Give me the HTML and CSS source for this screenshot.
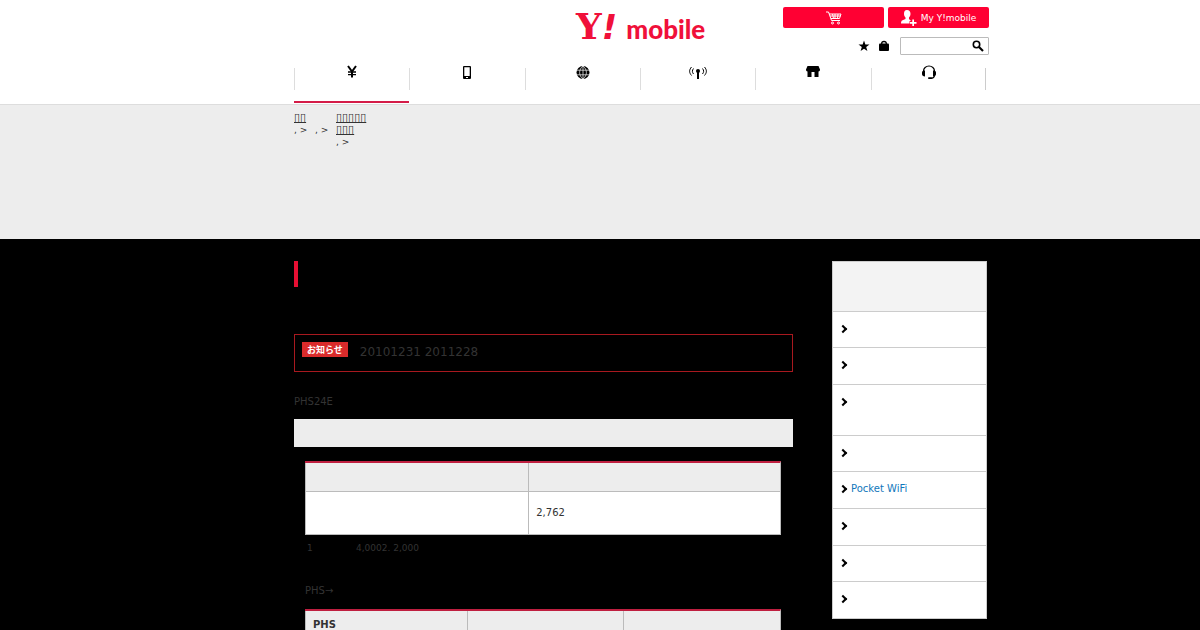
FILE: index.html
```html
<!DOCTYPE html>
<html lang="ja">
<head>
    <meta charset="utf-8">
    <meta name="viewport" content="width=device-width, initial-scale=1">
    <title>Y!mobile</title>
    <link rel="stylesheet" href="styles.css">
</head>
<body>
    <header class="header">
        <div class="wrap">
            <div class="header-top">
                <a class="logo" href="#"><span class="logo-y">Y</span><span class="logo-mark">!</span><span class="logo-name">mobile</span></a>
                <div class="tools">
                    <div class="buttons">
                        <a class="btn" href="#" aria-label="Cart">
                            <svg width="16" height="14" viewBox="0 0 16 14" fill="none" stroke="#fff">
                                <path d="M0 1h2.500l3 8.500H14M3 3h12l-1.500 4.500H5M4 5h10.500M6.500 3l1 4.500M9 3v4.500M12 3l-.5 4.500"/>
                                <circle cx="6.500" cy="12" r="1"/><circle cx="12.500" cy="12" r="1"/>
                            </svg>
                        </a>
                        <a class="btn" href="#">
                            <svg width="16" height="16" viewBox="0 0 16 16" fill="#fff">
                                <path d="M6 0C3.800 0 3 1.600 3 3.800c0 1.600.7 2.900 1.500 3.600v1.600L1 10.500C.3 11 0 12 0 13.500h8.500V11H10L8 9V7.400c.8-.7 1.500-2 1.500-3.600C9.500 1.600 8.200 0 6 0z"/>
                                <path d="M11.300 9.500h1.700V12h2.500v1.700H13V16h-1.700v-2.300H9V12h2.300z"/>
                            </svg>
                            <span>My Y!mobile</span>
                        </a>
                    </div>
                    <form class="search-row">
                        <a href="#" aria-label="Favorites"><svg width="12" height="12" viewBox="0 0 12 12"><path d="M6 .5l1.400 3.900 4.100.1-3.300 2.500 1.200 4L6 8.700 2.600 11l1.200-4L.5 4.500l4.100-.1z"/></svg></a>
                        <a href="#" aria-label="Shopping bag"><svg width="12" height="12" viewBox="0 0 12 12"><rect x="1" y="3.500" width="10" height="7.500" rx="1"/><path d="M3.700 5V3.500a2.300 2 0 0 1 4.600 0V5" fill="none" stroke="#000" stroke-width="1.300"/></svg></a>
                        <span class="search">
                            <input class="search-input" type="text" aria-label="Search">
                            <button class="search-btn" type="button" aria-label="Search">
                                <svg width="12" height="12" viewBox="0 0 12 12" fill="none" stroke="#000"><circle cx="4.500" cy="4.500" r="3.200" stroke-width="1.600"/><path d="M7 7l4 4" stroke-width="2.200"/></svg>
                            </button>
                        </span>
                    </form>
                </div>
            </div>
            <nav class="nav">
                <a class="nav-item current" href="#" aria-label="Price">
                    <svg width="16" height="16" viewBox="0 0 16 16" fill="none" stroke="#000"><path d="M4 2l4 5.500L12 2M8 7v6.500" stroke-width="2"/><path d="M4 8h8M4 10.700h8" stroke-width="1.300"/></svg>
                </a>
                <a class="nav-item" href="#" aria-label="Phones">
                    <svg width="16" height="16" viewBox="0 0 16 16"><path fill-rule="evenodd" d="M5 2h6a1 1 0 0 1 1 1v11a1 1 0 0 1-1 1H5a1 1 0 0 1-1-1V3a1 1 0 0 1 1-1zM5.300 3.300v8.700h5.400V3.300zM7 13h2v1H7z"/></svg>
                </a>
                <a class="nav-item" href="#" aria-label="Internet">
                    <svg width="16" height="16" viewBox="0 0 16 16"><circle cx="8" cy="8.500" r="6.500"/><path d="M2 6.200h12M1.500 10.800h13M8 2v13M8 2C3.500 5.500 3.500 11.500 8 15M8 2c4.500 3.500 4.500 9.500 0 13" fill="none" stroke="#fff" stroke-width=".7"/></svg>
                </a>
                <a class="nav-item" href="#" aria-label="Area">
                    <svg width="20" height="16" viewBox="0 0 20 16" fill="none" stroke="#000"><circle cx="10" cy="7" r="2" fill="#000" stroke="none"/><path d="M10 7v8" stroke-width="2"/><path d="M5.500 4.500c-1.500 2-1.500 3.500 0 5.500M3.500 3c-2.500 3-2.500 5.500 0 8.500M14.500 4.500c1.500 2 1.500 3.500 0 5.500M16.500 3c2.500 3 2.500 5.500 0 8.500"/></svg>
                </a>
                <a class="nav-item" href="#" aria-label="Shops">
                    <svg width="16" height="16" viewBox="0 0 16 16"><path d="M2.500 2h11L15 5.500c0 1.200-.5 2-1.500 2V13h-4V8h-3v5h-4V7.500C1.500 7.500 1 6.700 1 5.500z"/></svg>
                </a>
                <a class="nav-item" href="#" aria-label="Support">
                    <svg width="16" height="16" viewBox="0 0 16 16"><path d="M2.500 9V7a5.500 5 0 0 1 11 0v4c0 2-1.500 3.300-4 3.300" fill="none" stroke="#000" stroke-width="1.200"/><path d="M1 8.500C1 7 2.500 6.500 4 6.500v6C2 12.500 1 11.500 1 10zM15 8.500c0-1.500-1.500-2-3-2v6c2 0 3-1 3-2.500z"/><rect x="7" y="13.200" width="4" height="1.800" rx=".9"/></svg>
                </a>
            </nav>
        </div>
    </header>

    <div class="topic">
        <div class="wrap">
            <ol class="breadcrumb">
                <li><a href="#">▯▯</a>, &gt;</li>
                <li><br>, &gt;</li>
                <li><a href="#">▯▯▯▯▯<br>▯▯▯</a>, &gt;</li>
            </ol>
        </div>
    </div>

    <div class="wrap columns">
        <main class="content">
            <h1 class="title"></h1>
            <div class="notice">
                <span class="notice-label">お知らせ</span>
                <p class="notice-text">20101231 2011228</p>
            </div>
            <p class="lead">PHS24E</p>
            <h2 class="section-title"></h2>
            <div class="section">
                <table class="table">
                    <colgroup><col class="col-name"><col></colgroup>
                    <thead>
                        <tr><th></th><th></th></tr>
                    </thead>
                    <tbody>
                        <tr><td></td><td>2,762</td></tr>
                    </tbody>
                </table>
                <p class="note"><span class="note-mark">1</span><span>4,0002. 2,000</span></p>
                <p class="change">PHS→</p>
                <table class="table">
                    <colgroup><col class="col-plan"><col class="col-third"><col></colgroup>
                    <thead>
                        <tr><th>PHS</th><th></th><th></th></tr>
                    </thead>
                </table>
            </div>
        </main>

        <aside class="side">
            <div class="side-title"></div>
            <ul class="side-list">
                <li><a href="#" aria-label="Menu 1"></a></li>
                <li><a href="#" aria-label="Menu 2"></a></li>
                <li class="two-lines"><a href="#" aria-label="Menu 3"></a></li>
                <li><a href="#" aria-label="Menu 4"></a></li>
                <li><a href="#">Pocket WiFi</a></li>
                <li><a href="#" aria-label="Menu 6"></a></li>
                <li><a href="#" aria-label="Menu 7"></a></li>
                <li><a href="#" aria-label="Menu 8"></a></li>
            </ul>
        </aside>
    </div>
</body>
</html>
```
FILE: styles.css
```css
* {
    box-sizing: border-box;
}

body, h1, h2, p, ul, ol {
    margin: 0;
    padding: 0;
}

body {
    background: #000;
    color: #333;
    font-family: "DejaVu Sans", "Noto Sans CJK JP", sans-serif;
    font-size: 10px;
    line-height: 16px;
}

ul, ol {
    list-style: none;
}

svg {
    display: block;
    flex: none;
}

.wrap {
    max-width: 778px;
    margin: 0 auto;
    padding-left: 83px;
}

/* header */
.header {
    background: #fff;
    border-bottom: 1px solid #ddd;
    padding-bottom: 1px;
}

.header-top {
    display: flex;
    justify-content: space-between;
    height: 64px;
    padding: 7px 0 0 282px;
}

.logo {
    display: flex;
    align-items: baseline;
    color: #f0103a;
    line-height: 38px;
    text-decoration: none;
}

.logo-y {
    font-family: "DejaVu Serif", serif;
    font-size: 36px;
    font-weight: bold;
}

.logo-mark {
    font-size: 34px;
    font-weight: bold;
    font-style: italic;
}

.logo-name {
    padding-left: 9px;
    font-family: Lato, sans-serif;
    font-size: 26px;
    font-weight: 900;
}

.buttons {
    display: flex;
    gap: 4px;
}

.btn {
    display: flex;
    align-items: center;
    justify-content: center;
    gap: 4px;
    width: 101px;
    height: 21px;
    border-radius: 2px;
    background: #ff0033;
    color: #fff;
    font-size: 9px;
    text-decoration: none;
}

.search-row {
    display: flex;
    align-items: center;
    justify-content: flex-end;
    gap: 8px;
    margin-top: 9px;
}

.search {
    display: flex;
    width: 89px;
    height: 18px;
    margin-left: 2px;
    border: 1px solid #bbb;
    border-radius: 1px;
}

.search-input {
    flex: 1;
    min-width: 0;
    padding: 0 4px;
    border: 0;
    background: none;
    font-size: 10px;
}

.search-btn {
    padding: 0 4px;
    border: 0;
    background: none;
}

.nav {
    display: grid;
    grid-template-columns: repeat(6, 1fr);
    margin-right: 3px;
    background: linear-gradient(#ccc, #ccc) right 4px / 1px 22px no-repeat;
}

.nav-item {
    display: flex;
    justify-content: center;
    height: 39px;
    padding-left: 1px;
    border-bottom: 2px solid transparent;
    background: linear-gradient(#ddd, #ddd) 0 4px / 1px 22px no-repeat;
}

.current {
    border-bottom-color: #d41c48;
}

/* breadcrumb */
.topic {
    min-height: 134px;
    padding-top: 7px;
    background: #ededed;
}

.breadcrumb {
    display: flex;
    font-size: 9px;
    line-height: 12px;
}

.breadcrumb li {
    min-width: 21px;
}

.breadcrumb a {
    display: block;
    color: #333;
    font-size: 11px;
}

/* main column */
.columns {
    display: flex;
    align-items: flex-start;
    gap: 39px;
    padding-top: 22px;
    padding-right: 2px;
}

.content {
    flex: 1;
}

.title {
    height: 26px;
    border-left: 4px solid #e60f33;
}

.notice {
    display: flex;
    align-items: flex-start;
    gap: 12px;
    margin-top: 47px;
    padding: 7px 7px 9px;
    border: 1px solid #a8191f;
}

.notice-label {
    padding: 0 5px;
    background: #d92b2b;
    color: #fff;
    font-family: "Noto Sans CJK JP", sans-serif;
    font-size: 9px;
    font-weight: bold;
    line-height: 15px;
}

.notice-text {
    font-size: 12px;
    line-height: 20px;
}

.lead {
    margin-top: 22px;
}

.section-title {
    height: 28px;
    margin-top: 9px;
    background: #ededed;
}

.section {
    padding: 14px 12px 20px 11px;
}

.table {
    width: 100%;
    border-collapse: separate;
    border-spacing: 0;
    border-top: 2px solid #bf1f40;
    border-right: 1px solid #bbb;
    table-layout: fixed;
}

.col-name {
    width: 47%;
}

.col-plan {
    width: 34%;
}

.col-third {
    width: 33%;
}

.table th,
.table td {
    padding: 6px 7px;
    border-left: 1px solid #bbb;
    border-bottom: 1px solid #bbb;
    text-align: left;
}

.table th {
    height: 29px;
    background: #ededed;
}

.table td {
    height: 43px;
    background: #fff;
}

.note {
    display: flex;
    margin-top: 5px;
    padding-left: 2px;
    font-size: 9px;
}

.note-mark {
    width: 49px;
}

.change {
    margin: 27px 0 10px;
}

/* side menu */
.side {
    flex: none;
    width: 155px;
    border: 1px solid #ccc;
    border-bottom: 0;
    background: #fff;
}

.side-title {
    height: 50px;
    border-bottom: 1px solid #ccc;
    background: #f3f3f3;
}

.side-list li {
    padding: 9px 7px 11px;
    border-bottom: 1px solid #ccc;
}

.side-list li:nth-child(3n+1) {
    padding-bottom: 10px;
}

.side-list .two-lines {
    padding-bottom: 25px;
}

.side-list a {
    display: flex;
    align-items: center;
    gap: 5px;
    min-height: 16px;
    color: #1177bb;
    text-decoration: none;
}

.side-list a::before {
    content: "";
    box-sizing: border-box;
    width: 6px;
    height: 6px;
    border: solid #000;
    border-width: 2px 2px 0 0;
    transform: rotate(45deg);
}
```
